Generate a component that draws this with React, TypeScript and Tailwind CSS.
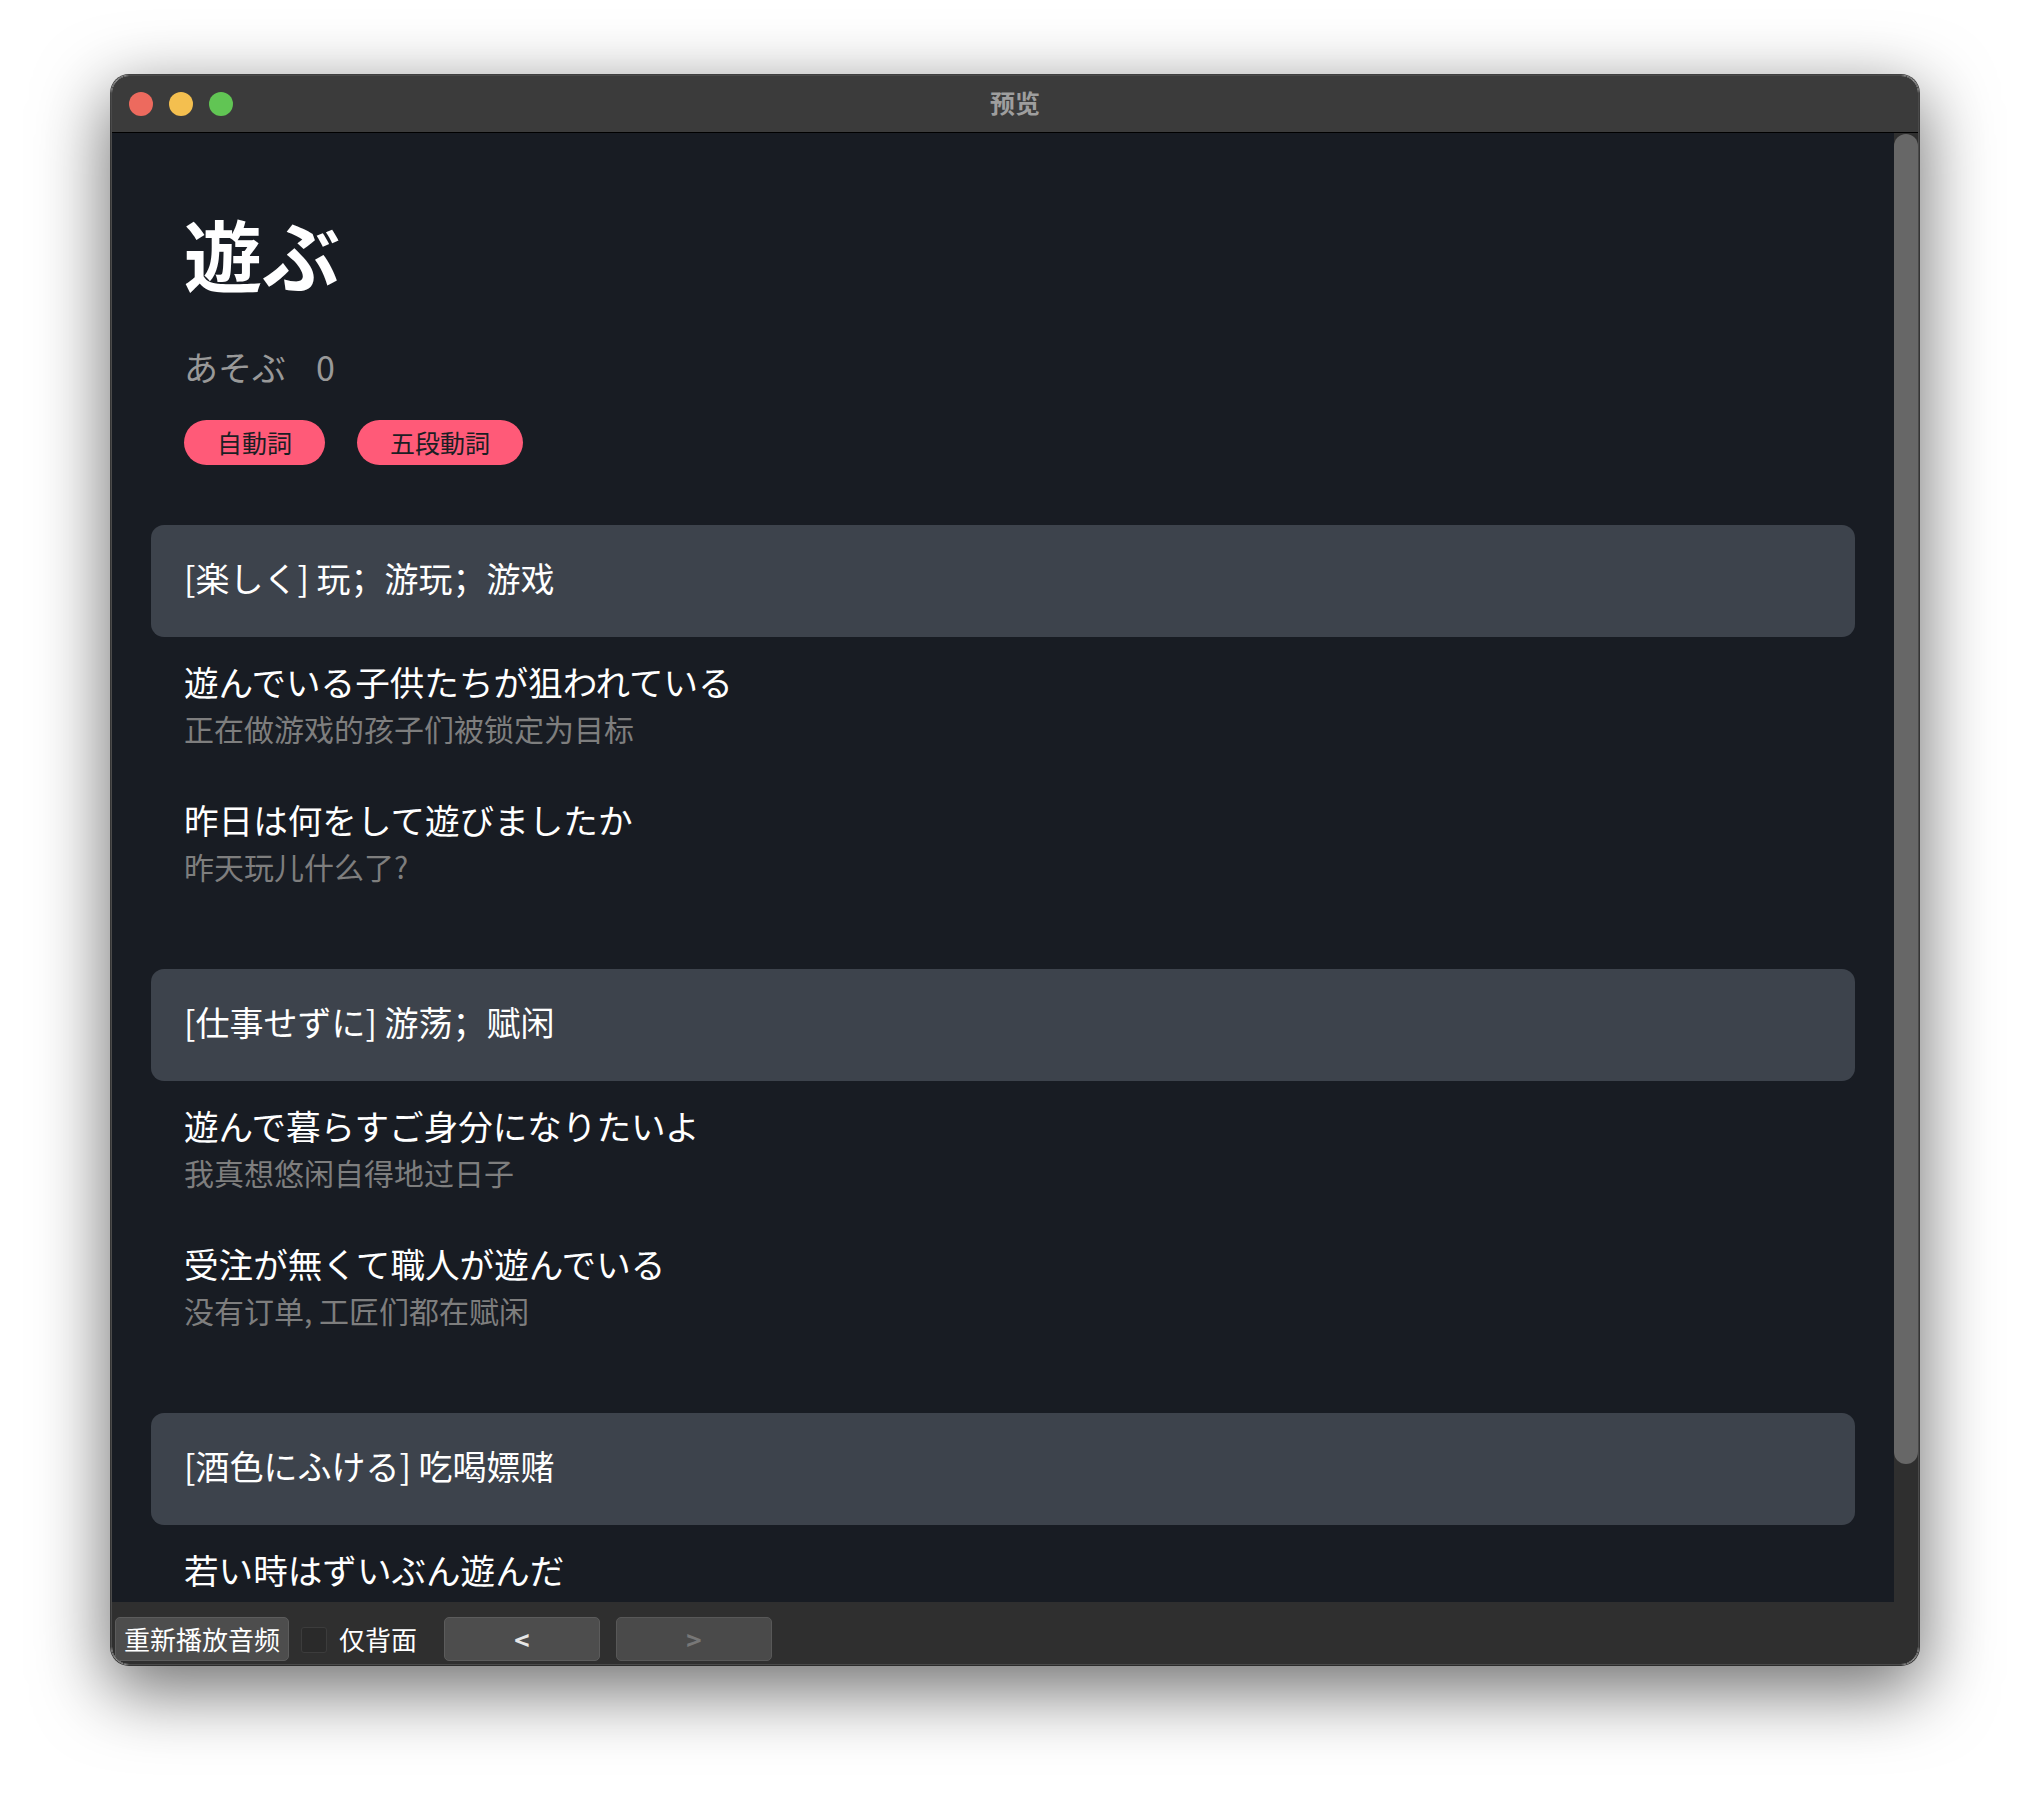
const sections = [
  {
    head: "[楽しく] 玩；游玩；游戏",
    examples: [
      ["遊んでいる子供たちが狙われている", "正在做游戏的孩子们被锁定为目标"],
      ["昨日は何をして遊びましたか", "昨天玩儿什么了?"],
    ],
  },
  {
    head: "[仕事せずに] 游荡；赋闲",
    examples: [
      ["遊んで暮らすご身分になりたいよ", "我真想悠闲自得地过日子"],
      ["受注が無くて職人が遊んでいる", "没有订单, 工匠们都在赋闲"],
    ],
  },
  {
    head: "[酒色にふける] 吃喝嫖赌",
    examples: [["若い時はずいぶん遊んだ", "年轻时没少吃喝玩乐"]],
  },
];

function TitleBar() {
  return (
    <div className="relative flex h-[57px] shrink-0 items-center border-b border-black bg-[#3b3b3b]">
      <div className="flex items-center gap-[16px] pl-[17px]">
        <span className="h-[24px] w-[24px] rounded-full bg-[#ed6a5e]" />
        <span className="h-[24px] w-[24px] rounded-full bg-[#f4bf4f]" />
        <span className="h-[24px] w-[24px] rounded-full bg-[#61c554]" />
      </div>
      {/* titulo centralizado na janela */}
      <div className="absolute inset-0 flex items-center justify-center pb-[2px] font-['Noto_Sans_CJK_SC',sans-serif] text-[25px] font-bold text-[#9e9e9e]">
        预览
      </div>
    </div>
  );
}

function Section({ head, examples }: { head: string; examples: string[][] }) {
  return (
    <div className="mb-[56px]">
      <div className="flex h-[112px] items-center rounded-[13px] bg-[#3d434c] px-[33px] pb-[7px] font-['Noto_Sans_CJK_SC',sans-serif] text-[34px] text-white">
        {head}
      </div>
      {examples.map(([jp, zh]) => (
        <div key={jp} className="px-[33px] pb-[25px] pt-[19px]">
          <div className="text-[34.6px] leading-[50px] text-white">{jp}</div>
          <div className="font-['Noto_Sans_CJK_SC',sans-serif] text-[30px] leading-[44px] text-[#7e7e7e]">{zh}</div>
        </div>
      ))}
    </div>
  );
}

function BottomBar() {
  return (
    <div className="flex h-[62px] shrink-0 items-start bg-[#2f2f2f] pl-[3px] pt-[15px] font-['Noto_Sans_CJK_SC',sans-serif] text-white">
      <button className="flex h-[44px] shrink-0 items-center whitespace-nowrap rounded-[5px] border border-[#5c5c5c] bg-[#4d4d4d] px-[8px] text-[26px] leading-[40px]">
        重新播放音频
      </button>
      <span className="ml-[12px] mt-[10px] h-[26px] w-[26px] shrink-0 rounded-[3px] border border-[#3c3c3c] bg-[#2a2a2a]" />
      <span className="ml-[12px] flex h-[44px] items-center whitespace-nowrap text-[26px] leading-[40px]">仅背面</span>
      <button className="ml-[27px] flex h-[44px] w-[156px] items-center justify-center rounded-[5px] border border-[#5c5c5c] bg-[#4d4d4d] text-[26px] font-bold leading-[40px] text-[#e6e6e6]">
        &lt;
      </button>
      <button className="ml-[16px] flex h-[44px] w-[156px] items-center justify-center rounded-[5px] border border-[#585858] bg-[#4a4a4a] text-[26px] font-bold leading-[40px] text-[#777777]">
        &gt;
      </button>
    </div>
  );
}

export default function App() {
  return (
    <div className="min-h-[1812px] w-[2030px] bg-white pl-[111px] pt-[75px] font-['Noto_Sans_CJK_JP','Noto_Sans_CJK_SC',sans-serif]">
      <div className="flex h-[1590px] w-[1808px] flex-col overflow-hidden rounded-[18px] border border-[#4a4a4a] shadow-[0_22px_70px_4px_rgba(0,0,0,0.56),0_0_0_1px_rgba(0,0,0,0.7)]">
        <TitleBar />
        <div className="flex min-h-0 flex-1">
          <div className="min-w-0 flex-1 overflow-hidden bg-[#181c23] px-[39px] pt-[80px]">
            <div className="px-[33px]">
              <h1 className="text-[78px] font-bold leading-[80px] text-white">遊ぶ</h1>
              <div className="mt-[57px] text-[34px] leading-[34px] text-[#999999]">
                あそぶ<span className="ml-[30px]">0</span>
              </div>
              <div className="mt-[36px] flex gap-[32px]">
                <span className="flex h-[45px] items-center rounded-full bg-[#ff5a78] px-[33px] text-[25px] text-[#1b1e24]">自動詞</span>
                <span className="flex h-[45px] items-center rounded-full bg-[#ff5a78] px-[33px] text-[25px] text-[#1b1e24]">五段動詞</span>
              </div>
            </div>
            <div className="mt-[60px]">
              {sections.map((s) => (
                <Section key={s.head} head={s.head} examples={s.examples} />
              ))}
            </div>
          </div>
          <div className="w-[24px] shrink-0 bg-[#2f2f2f]">
            <div className="mt-[1px] h-[1330px] rounded-full bg-[#676767]" />
          </div>
        </div>
        <BottomBar />
      </div>
    </div>
  );
}
